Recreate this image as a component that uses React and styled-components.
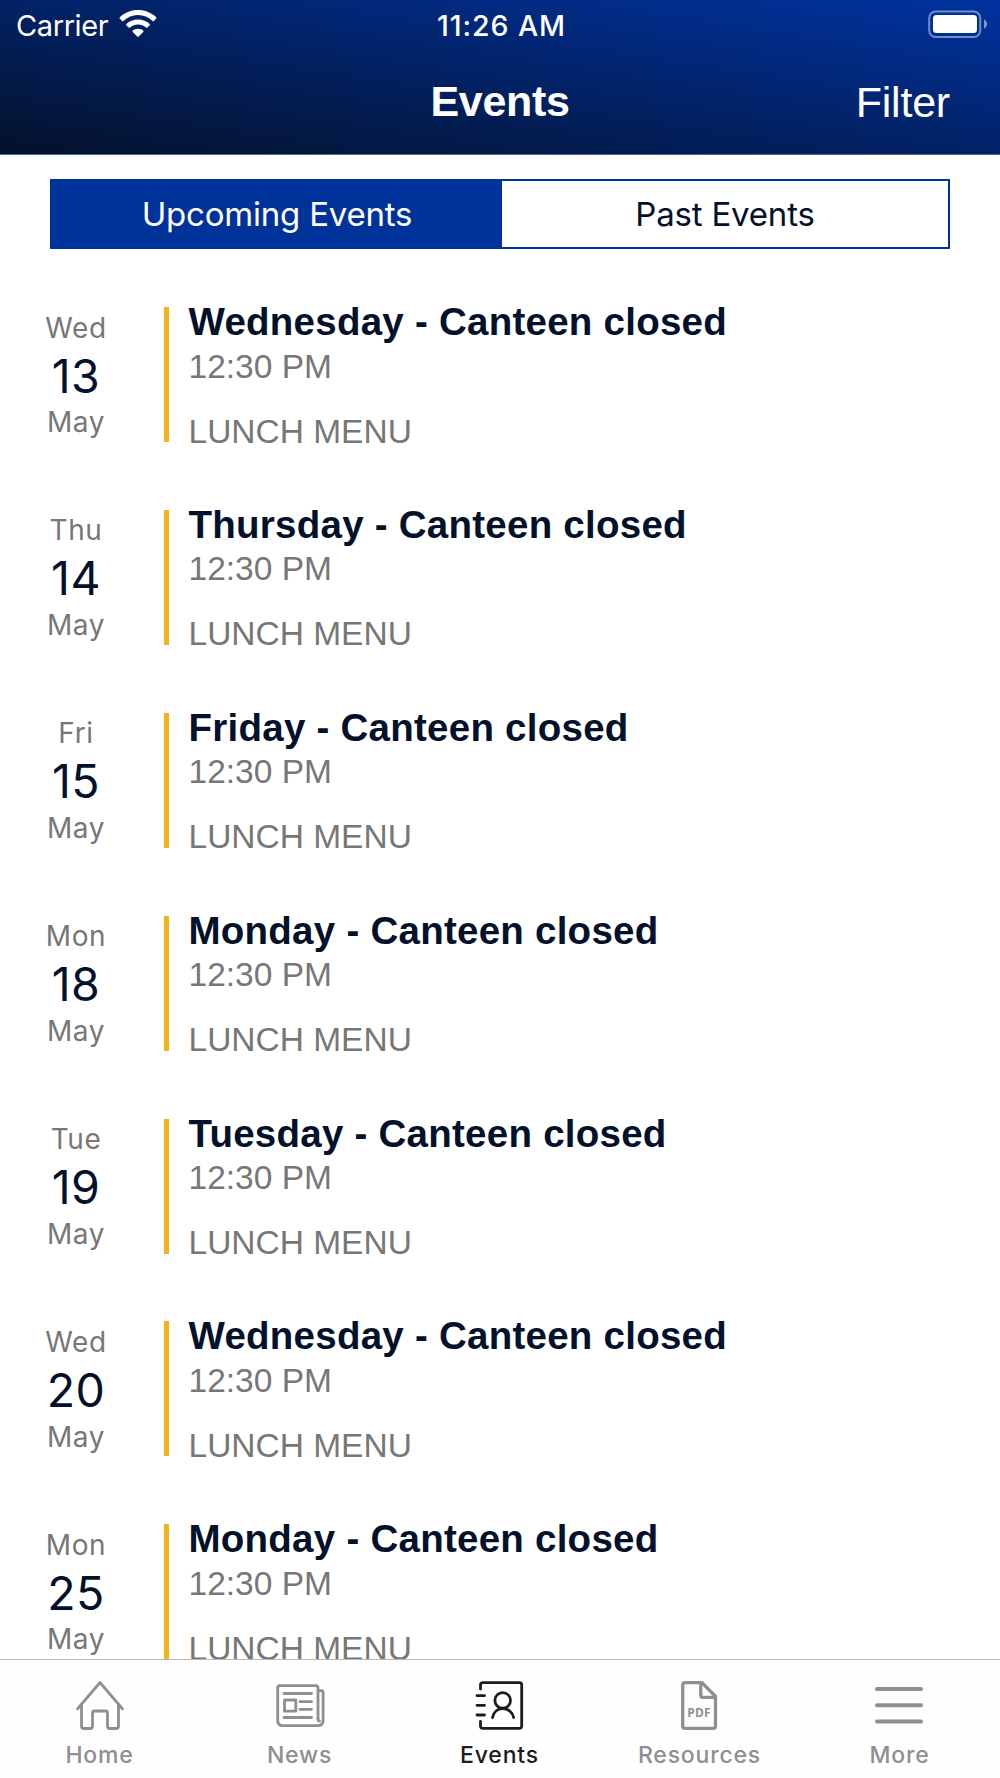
import React from "react";
import styled, { createGlobalStyle } from "styled-components";

const GlobalStyle = createGlobalStyle`
  * {
    box-sizing: border-box;
  }

  body {
    margin: 0;
    background: #ffffff;
    font-family: Inter, "Liberation Sans", sans-serif;
  }
`;

const Screen = styled.div`
  display: flex;
  flex-direction: column;
  width: 1000px;
  height: 1778px;
  overflow: hidden;
  background: #ffffff;
`;

const Header = styled.header`
  flex: none;
  height: 155px;
  color: #ffffff;
  background: linear-gradient(to top right, #04112b, #0033a0);
  border-bottom: 1px solid #55648c;
`;

const StatusBar = styled.div`
  display: grid;
  grid-template-columns: 1fr auto 1fr;
  height: 51px;
  padding: 0 13px 0 16px;
  line-height: 51px;
`;

const Carrier = styled.div`
  display: flex;
  gap: 11px;
  font-size: 29px;
  letter-spacing: -0.4px;

  svg {
    margin-top: 9px;
  }
`;

const Clock = styled.div`
  font-size: 28.5px;
  font-weight: 550;
  line-height: 52px;
  letter-spacing: 0.9px;
`;

const Battery = styled.div`
  display: flex;
  justify-content: flex-end;

  svg {
    margin-top: 9px;
  }
`;

const NavBar = styled.div`
  display: grid;
  grid-template-columns: 1fr auto 1fr;
  padding: 0 50px;
  font-family: "Liberation Sans", sans-serif;
`;

const NavTitle = styled.h1`
  grid-column: 2;
  margin: 0;
  font-size: 43px;
  font-weight: 700;
  line-height: 100px;
  letter-spacing: -0.3px;
`;

const NavAction = styled.a`
  justify-self: end;
  font-size: 43px;
  line-height: 102px;
  letter-spacing: -0.2px;
`;

const Segments = styled.div`
  display: grid;
  grid-template-columns: 450px 1fr;
  flex: none;
  height: 70px;
  margin: 24px 50px 0;
  border: 2px solid #003399;
`;

const Segment = styled.div`
  font-size: 33px;
  line-height: 66px;
  letter-spacing: -0.2px;
  text-align: center;
  color: ${(props) => (props.$active ? "#ffffff" : "#04112b")};
  background: ${(props) => (props.$active ? "#003399" : "#ffffff")};
`;

const EventList = styled.main`
  flex: 1;
  min-height: 0;
  padding-top: 58px;
  overflow: hidden;
`;

const EventRow = styled.article`
  display: flex;
  height: 135px;
  margin-bottom: 67.9px;
`;

const EventDate = styled.div`
  flex: none;
  width: 152px;
  padding-top: 3.6px;
  text-align: center;
`;

const DateLabel = styled.div`
  font-size: 28px;
  line-height: 34px;
  letter-spacing: 0.6px;
  color: #777777;
`;

const DateNumber = styled.div`
  margin: 6px 0 4.5px;
  font-size: 46.5px;
  line-height: 50px;
  letter-spacing: 0.4px;
  color: #04112b;
`;

const Divider = styled.div`
  flex: none;
  width: 5px;
  height: 135px;
  margin: 0 19.5px 0 12px;
  background: #f5af19;
`;

const EventBody = styled.div`
  font-family: "Liberation Sans", sans-serif;
  white-space: nowrap;
`;

const EventTitle = styled.h2`
  margin: 0;
  font-size: 38.5px;
  font-weight: 700;
  line-height: 30px;
  letter-spacing: 0.25px;
  color: #04112b;
`;

const EventText = styled.p`
  margin: ${(props) => props.$gap}px 0 0;
  font-size: 33.5px;
  line-height: 40px;
  color: #777777;
`;

const TabBar = styled.nav`
  display: grid;
  grid-template-columns: repeat(5, 200px);
  flex: none;
  height: 119px;
  padding-top: 20px;
  background: #fefefe;
  border-top: 1px solid #b8b8b8;
`;

const Tab = styled.a`
  display: flex;
  flex-direction: column;
  align-items: center;
  gap: 11px;
  color: ${(props) => (props.$active ? "#1c1c1c" : "#8e8e93")};
`;

const TabLabel = styled.span`
  margin-right: 1px;
  font-size: 23px;
  font-weight: 500;
  line-height: 28px;
  letter-spacing: 0.8px;
`;

const Icon = styled.svg`
  display: block;
  width: 50px;
  height: 50px;
  fill: none;
  stroke: currentColor;
  stroke-width: ${(props) => props.$stroke || 2.8};
  stroke-linecap: round;
  stroke-linejoin: round;
`;

const PdfText = styled.text`
  font-family: "Open Sans", sans-serif;
  font-size: 12px;
  font-weight: 700;
  letter-spacing: 0.2px;
  fill: currentColor;
  stroke: none;
`;

const WifiIcon = () => (
  <svg width="38" height="30" viewBox="0 0 38 30" fill="#ffffff">
    <path d="M19 1C12 1 5.500 3.700.800 8.200q-.7.700 0 1.400l2.300 2.300q.6.600 1.300 0C8.300 8.200 13.400 6 19 6s10.700 2.200 14.600 5.900q.7.600 1.300 0l2.300-2.300q.7-.7 0-1.400C32.500 3.700 26 1 19 1z" />
    <path d="M19 10.400c-4.500 0-8.600 1.700-11.700 4.500q-.7.700 0 1.400l2.400 2.300q.6.600 1.300 0c2.200-1.900 5-3.100 8-3.100s5.800 1.200 8 3.100q.7.600 1.300 0l2.400-2.300q.7-.7 0-1.400c-3.100-2.800-7.200-4.500-11.700-4.500z" />
    <path d="M19 19.700c-2 0-3.800.700-5.200 1.900q-.7.600 0 1.300l4.500 4.700q.7.700 1.400 0l4.500-4.700q.7-.7 0-1.300c-1.400-1.200-3.200-1.900-5.200-1.900z" />
  </svg>
);

const BatteryIcon = () => (
  <svg width="60" height="30" viewBox="0 0 60 30">
    <rect x="2.200" y="2.500" width="51" height="25.500" rx="6.500" fill="none" stroke="#ffffff" strokeOpacity="0.45" strokeWidth="2" />
    <rect x="6" y="6" width="44" height="18" rx="3.500" fill="#ffffff" />
    <path d="M57 10.500q3 1.500 3 4.600t-3 4.600z" fill="#ffffff" fillOpacity="0.5" />
  </svg>
);

const HomeIcon = () => (
  <Icon viewBox="0 0 50 50">
    <path d="M2.500 28.800 25 2.500l22.500 26.300" />
    <path d="M6.500 25v21q0 2.500 2.500 2.500h6q2.500 0 2.500-2.500V33q0-2 2-2h11q2 0 2 2v13q0 2.500 2.500 2.500h6q2.500 0 2.500-2.500V25" />
  </Icon>
);

const NewsIcon = () => (
  <Icon viewBox="0 0 50 50">
    <path d="M43 38.500V8q0-2.300-2.300-2.300H5Q2.700 5.700 2.700 8v32.500q0 5.200 5.200 5.200h35q5.200 0 5.200-5.200V12.700q0-2-2-2h-3" />
    <path d="M43 38v1.500q0 1.500 1.500 1.500" />
    <path d="M9 13.500h27.500M9 37.500h27.500M25 21.700h11.500M25 29.300h11.500" />
    <rect x="9.500" y="20" width="11.300" height="11.200" />
  </Icon>
);

const EventsIcon = () => (
  <Icon viewBox="0 0 50 50">
    <path d="M5.500 9V5q0-2.300 2.300-2.300h36.600q2.300 0 2.300 2.300v41q0 2.300-2.300 2.300H7.800Q5.500 48.300 5.500 46v-4.500" />
    <path d="M2 15.700h7.500M2 25.300h7.500M2 35h7.500" />
    <circle cx="27.700" cy="20.400" r="7.800" />
    <path d="M17.500 37.500c1-5.500 5-9 10.200-9s9.700 3.500 10.900 9" />
  </Icon>
);

const ResourcesIcon = () => (
  <Icon viewBox="1.500 0 50 50" $stroke={3.3}>
    <path d="M28.500 2.700H11.500Q9.200 2.700 9.200 5v41q0 2.300 2.300 2.300H39.700q2.300 0 2.300-2.300V16.500z" />
    <path d="M27.300 3v12.500q0 1.800 1.800 1.800H41.500" />
    <PdfText x="13.800" y="36.800">PDF</PdfText>
  </Icon>
);

const MoreIcon = () => (
  <Icon viewBox="1 0 50 50" $stroke={4}>
    <path d="M3 9h44M3 25.300h44M3 41.600h44" />
  </Icon>
);

const events = [
  { day: "Wed", date: "13", month: "May", title: "Wednesday - Canteen closed" },
  { day: "Thu", date: "14", month: "May", title: "Thursday - Canteen closed" },
  { day: "Fri", date: "15", month: "May", title: "Friday - Canteen closed" },
  { day: "Mon", date: "18", month: "May", title: "Monday - Canteen closed" },
  { day: "Tue", date: "19", month: "May", title: "Tuesday - Canteen closed" },
  { day: "Wed", date: "20", month: "May", title: "Wednesday - Canteen closed" },
  { day: "Mon", date: "25", month: "May", title: "Monday - Canteen closed" },
];

const tabs = [
  { label: "Home", icon: HomeIcon },
  { label: "News", icon: NewsIcon },
  { label: "Events", icon: EventsIcon, active: true },
  { label: "Resources", icon: ResourcesIcon },
  { label: "More", icon: MoreIcon },
];

function Event({ event }) {
  return (
    <EventRow>
      <EventDate>
        <DateLabel>{event.day}</DateLabel>
        <DateNumber>{event.date}</DateNumber>
        <DateLabel>{event.month}</DateLabel>
      </EventDate>
      <Divider />
      <EventBody>
        <EventTitle>{event.title}</EventTitle>
        <EventText $gap={9.6}>12:30 PM</EventText>
        <EventText $gap={25}>LUNCH MENU</EventText>
      </EventBody>
    </EventRow>
  );
}

function App() {
  return (
    <Screen>
      <GlobalStyle />
      <Header>
        <StatusBar>
          <Carrier>
            Carrier
            <WifiIcon />
          </Carrier>
          <Clock>11:26 AM</Clock>
          <Battery>
            <BatteryIcon />
          </Battery>
        </StatusBar>
        <NavBar>
          <NavTitle>Events</NavTitle>
          <NavAction>Filter</NavAction>
        </NavBar>
      </Header>

      <Segments>
        <Segment $active>Upcoming Events</Segment>
        <Segment>Past Events</Segment>
      </Segments>

      <EventList>
        {events.map((event) => (
          <Event key={event.date} event={event} />
        ))}
      </EventList>

      <TabBar>
        {tabs.map(({ label, icon: TabIcon, active }) => (
          <Tab key={label} $active={active}>
            <TabIcon />
            <TabLabel>{label}</TabLabel>
          </Tab>
        ))}
      </TabBar>
    </Screen>
  );
}

export default App;
